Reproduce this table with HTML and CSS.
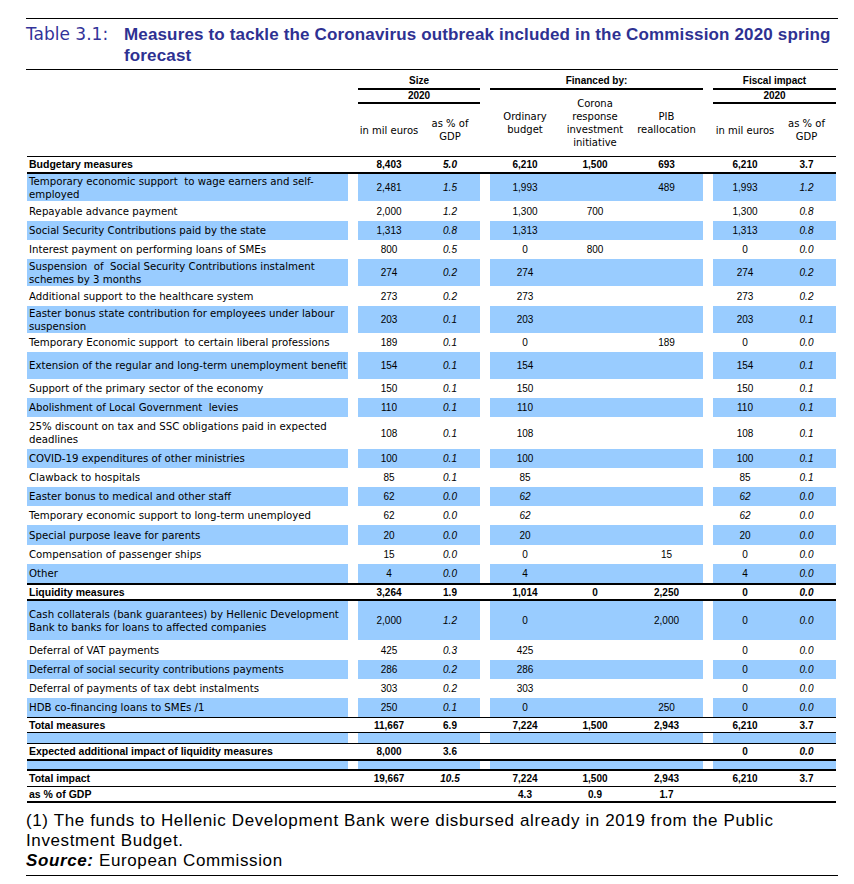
FILE: index.html
```html
<!DOCTYPE html>
<html>
<head>
<meta charset="utf-8">
<link rel="stylesheet" href="styles.css">
</head>
<body>
<div class="page">
  <div class="title">
    <div class="tno">Table 3.1:</div>
    <div class="ttl">Measures to tackle the Coronavirus outbreak included in the Commission 2020 spring<br>forecast</div>
  </div>

  <div class="tbl">
    <div class="r hd1">
      <div></div>
      <div class="hg">Size</div>
      <div class="hg">Financed by:</div>
      <div class="hg">Fiscal impact</div>
    </div>
    <div class="r hd2">
      <div></div>
      <div class="hcol">
        <div class="yr">2020</div>
        <div class="sub2"><span>in mil euros</span><span>as % of<br>GDP</span></div>
      </div>
      <div class="sub3"><span>Ordinary<br>budget</span><span>Corona<br>response<br>investment<br>initiative</span><span>PIB<br>reallocation</span></div>
      <div class="hcol">
        <div class="yr">2020</div>
        <div class="sub2 fs"><span>in mil euros</span><span>as % of<br>GDP</span></div>
      </div>
    </div>

    <div class="r bold h17 b2">
      <div class="lbl">Budgetary measures</div>
      <div class="g sz"><span>8,403</span><span class="i">5.0</span></div>
      <div class="g fn"><span>6,210</span><span>1,500</span><span>693</span></div>
      <div class="g fs"><span>6,210</span><span>3.7</span></div>
    </div>

    <div class="r blue h27">
      <div class="lbl">Temporary economic support &nbsp;to wage earners and self-<br>employed</div>
      <div class="g sz"><span>2,481</span><span class="i">1.5</span></div>
      <div class="g fn"><span>1,993</span><span></span><span>489</span></div>
      <div class="g fs"><span>1,993</span><span class="i">1.2</span></div>
    </div>
    <div class="r h20">
      <div class="lbl">Repayable advance payment</div>
      <div class="g sz"><span>2,000</span><span class="i">1.2</span></div>
      <div class="g fn"><span>1,300</span><span>700</span><span></span></div>
      <div class="g fs"><span>1,300</span><span class="i">0.8</span></div>
    </div>
    <div class="r blue h19">
      <div class="lbl">Social Security Contributions paid by the state</div>
      <div class="g sz"><span>1,313</span><span class="i">0.8</span></div>
      <div class="g fn"><span>1,313</span><span></span><span></span></div>
      <div class="g fs"><span>1,313</span><span class="i">0.8</span></div>
    </div>
    <div class="r h19">
      <div class="lbl">Interest payment on performing loans of SMEs</div>
      <div class="g sz"><span>800</span><span class="i">0.5</span></div>
      <div class="g fn"><span>0</span><span>800</span><span></span></div>
      <div class="g fs"><span>0</span><span class="i">0.0</span></div>
    </div>
    <div class="r blue h27">
      <div class="lbl">Suspension &nbsp;of &nbsp;Social Security Contributions instalment<br>schemes by 3 months</div>
      <div class="g sz"><span>274</span><span class="i">0.2</span></div>
      <div class="g fn"><span>274</span><span></span><span></span></div>
      <div class="g fs"><span>274</span><span class="i">0.2</span></div>
    </div>
    <div class="r h20">
      <div class="lbl">Additional support to the healthcare system</div>
      <div class="g sz"><span>273</span><span class="i">0.2</span></div>
      <div class="g fn"><span>273</span><span></span><span></span></div>
      <div class="g fs"><span>273</span><span class="i">0.2</span></div>
    </div>
    <div class="r blue h27">
      <div class="lbl">Easter bonus state contribution for employees under labour<br>suspension</div>
      <div class="g sz"><span>203</span><span class="i">0.1</span></div>
      <div class="g fn"><span>203</span><span></span><span></span></div>
      <div class="g fs"><span>203</span><span class="i">0.1</span></div>
    </div>
    <div class="r h19">
      <div class="lbl">Temporary Economic support &nbsp;to certain liberal professions</div>
      <div class="g sz"><span>189</span><span class="i">0.1</span></div>
      <div class="g fn"><span>0</span><span></span><span>189</span></div>
      <div class="g fs"><span>0</span><span class="i">0.0</span></div>
    </div>
    <div class="r blue h27">
      <div class="lbl">Extension of the regular and long-term unemployment benefit</div>
      <div class="g sz"><span>154</span><span class="i">0.1</span></div>
      <div class="g fn"><span>154</span><span></span><span></span></div>
      <div class="g fs"><span>154</span><span class="i">0.1</span></div>
    </div>
    <div class="r h19">
      <div class="lbl">Support of the primary sector of the economy</div>
      <div class="g sz"><span>150</span><span class="i">0.1</span></div>
      <div class="g fn"><span>150</span><span></span><span></span></div>
      <div class="g fs"><span>150</span><span class="i">0.1</span></div>
    </div>
    <div class="r blue h19">
      <div class="lbl">Abolishment of Local Government &nbsp;levies</div>
      <div class="g sz"><span>110</span><span class="i">0.1</span></div>
      <div class="g fn"><span>110</span><span></span><span></span></div>
      <div class="g fs"><span>110</span><span class="i">0.1</span></div>
    </div>
    <div class="r h32">
      <div class="lbl">25% discount on tax and SSC obligations paid in expected<br>deadlines</div>
      <div class="g sz"><span>108</span><span class="i">0.1</span></div>
      <div class="g fn"><span>108</span><span></span><span></span></div>
      <div class="g fs"><span>108</span><span class="i">0.1</span></div>
    </div>
    <div class="r blue h19">
      <div class="lbl">COVID-19 expenditures of other ministries</div>
      <div class="g sz"><span>100</span><span class="i">0.1</span></div>
      <div class="g fn"><span>100</span><span></span><span></span></div>
      <div class="g fs"><span>100</span><span class="i">0.1</span></div>
    </div>
    <div class="r h19">
      <div class="lbl">Clawback to hospitals</div>
      <div class="g sz"><span>85</span><span class="i">0.1</span></div>
      <div class="g fn"><span>85</span><span></span><span></span></div>
      <div class="g fs"><span>85</span><span class="i">0.1</span></div>
    </div>
    <div class="r blue h19">
      <div class="lbl">Easter bonus to medical and other staff</div>
      <div class="g sz"><span>62</span><span class="i">0.0</span></div>
      <div class="g fn"><span class="i">62</span><span></span><span></span></div>
      <div class="g fs"><span class="i">62</span><span class="i">0.0</span></div>
    </div>
    <div class="r h19">
      <div class="lbl">Temporary economic support to long-term unemployed</div>
      <div class="g sz"><span>62</span><span class="i">0.0</span></div>
      <div class="g fn"><span class="i">62</span><span></span><span></span></div>
      <div class="g fs"><span class="i">62</span><span class="i">0.0</span></div>
    </div>
    <div class="r blue h20">
      <div class="lbl">Special purpose leave for parents</div>
      <div class="g sz"><span>20</span><span class="i">0.0</span></div>
      <div class="g fn"><span>20</span><span></span><span></span></div>
      <div class="g fs"><span>20</span><span class="i">0.0</span></div>
    </div>
    <div class="r h19">
      <div class="lbl">Compensation of passenger ships</div>
      <div class="g sz"><span>15</span><span class="i">0.0</span></div>
      <div class="g fn"><span>0</span><span></span><span>15</span></div>
      <div class="g fs"><span>0</span><span class="i">0.0</span></div>
    </div>
    <div class="r blue h21 b2">
      <div class="lbl">Other</div>
      <div class="g sz"><span>4</span><span class="i">0.0</span></div>
      <div class="g fn"><span>4</span><span></span><span></span></div>
      <div class="g fs"><span>4</span><span class="i">0.0</span></div>
    </div>

    <div class="r bold h16 b2">
      <div class="lbl">Liquidity measures</div>
      <div class="g sz"><span>3,264</span><span>1.9</span></div>
      <div class="g fn"><span>1,014</span><span>0</span><span>2,250</span></div>
      <div class="g fs"><span>0</span><span class="i">0.0</span></div>
    </div>
    <div class="r blue h39">
      <div class="lbl">Cash collaterals (bank guarantees) by Hellenic Development<br>Bank to banks for loans to affected companies</div>
      <div class="g sz"><span>2,000</span><span class="i">1.2</span></div>
      <div class="g fn"><span>0</span><span></span><span>2,000</span></div>
      <div class="g fs"><span>0</span><span class="i">0.0</span></div>
    </div>
    <div class="r h20">
      <div class="lbl">Deferral of VAT payments</div>
      <div class="g sz"><span>425</span><span class="i">0.3</span></div>
      <div class="g fn"><span>425</span><span></span><span></span></div>
      <div class="g fs"><span>0</span><span class="i">0.0</span></div>
    </div>
    <div class="r blue h19">
      <div class="lbl">Deferral of social security contributions payments</div>
      <div class="g sz"><span>286</span><span class="i">0.2</span></div>
      <div class="g fn"><span>286</span><span></span><span></span></div>
      <div class="g fs"><span>0</span><span class="i">0.0</span></div>
    </div>
    <div class="r h19">
      <div class="lbl">Deferral of payments of tax debt instalments</div>
      <div class="g sz"><span>303</span><span class="i">0.2</span></div>
      <div class="g fn"><span>303</span><span></span><span></span></div>
      <div class="g fs"><span>0</span><span class="i">0.0</span></div>
    </div>
    <div class="r blue h20 b1">
      <div class="lbl">HDB co-financing loans to SMEs /1</div>
      <div class="g sz"><span>250</span><span class="i">0.1</span></div>
      <div class="g fn"><span>0</span><span></span><span>250</span></div>
      <div class="g fs"><span>0</span><span class="i">0.0</span></div>
    </div>
    <div class="r bold h15 b1">
      <div class="lbl">Total measures</div>
      <div class="g sz"><span>11,667</span><span>6.9</span></div>
      <div class="g fn"><span>7,224</span><span>1,500</span><span>2,943</span></div>
      <div class="g fs"><span>6,210</span><span>3.7</span></div>
    </div>
    <div class="r blue h11 b1">
      <div class="lbl"></div>
      <div class="g"></div>
      <div class="g"></div>
      <div class="g"></div>
    </div>
    <div class="r bold h17 b2">
      <div class="lbl">Expected additional impact of liquidity measures</div>
      <div class="g sz"><span>8,000</span><span>3.6</span></div>
      <div class="g fn"><span></span><span></span><span></span></div>
      <div class="g fs"><span>0</span><span class="i">0.0</span></div>
    </div>
    <div class="r blue h10 b2">
      <div class="lbl"></div>
      <div class="g"></div>
      <div class="g"></div>
      <div class="g"></div>
    </div>
    <div class="r bold h16 b1">
      <div class="lbl">Total impact</div>
      <div class="g sz"><span>19,667</span><span class="i">10.5</span></div>
      <div class="g fn"><span>7,224</span><span>1,500</span><span>2,943</span></div>
      <div class="g fs"><span>6,210</span><span>3.7</span></div>
    </div>
    <div class="r bold h16 b2">
      <div class="lbl">as % of GDP</div>
      <div class="g sz"><span></span><span></span></div>
      <div class="g fn"><span>4.3</span><span>0.9</span><span>1.7</span></div>
      <div class="g fs"><span></span><span></span></div>
    </div>
  </div>

  <div class="foot">
    <div>(1) The funds to Hellenic Development Bank were disbursed already in 2019 from the Public<br>Investment Budget.</div>
    <div><b><i>Source:</i></b> European Commission</div>
  </div>
</div>
</body>
</html>
```

FILE: styles.css
```css
* { box-sizing: border-box; }
body {
  margin: 0;
  background: #fff;
  color: #000;
  font-family: "DejaVu Sans", sans-serif;
}
.page {
  width: 812px;
  margin: 18px 0 0 26px;
}
.title {
  display: flex;
  border-top: 1px solid #000;
  border-bottom: 1px solid #000;
  padding: 5px 0 3px;
  line-height: 21px;
  white-space: nowrap;
}
.tno {
  width: 98px;
  flex: none;
  font-family: "DejaVu Sans", sans-serif;
  font-size: 17px;
  color: #333399;
}
.ttl {
  font-family: "Liberation Sans", Arial, sans-serif;
  font-weight: bold;
  font-size: 17px;
  letter-spacing: 0.15px;
  color: #2e3192;
}
.tbl {
  width: 809px;
  margin-left: 1px;
}
.r {
  display: grid;
  grid-template-columns: 321px 122px 213px 123px;
  column-gap: 10px;
  font-family: "Liberation Sans", Arial, sans-serif;
  font-size: 10px;
}
.b1 { border-bottom: 1px solid #000; }
.b2 { border-bottom: 2px solid #000; }
.h10 { height: 10px; }
.h11 { height: 11px; }
.h15 { height: 15px; }
.h16 { height: 16px; }
.h17 { height: 17px; }
.h19 { height: 19px; }
.h20 { height: 20px; }
.h21 { height: 21px; }
.h27 { height: 27px; }
.h32 { height: 32px; }
.h39 { height: 39px; }

/* header */
.hd1 { height: 20px; }
.hg {
  border-bottom: 2px solid #000;
  display: flex;
  align-items: flex-end;
  justify-content: center;
  padding-bottom: 1px;
  line-height: 12px;
  font-weight: bold;
  font-size: 10px;
}
.hd2 {
  height: 67px;
  border-bottom: 1px solid #000;
}
.hcol {
  display: flex;
  flex-direction: column;
}
.yr {
  height: 14px;
  border-bottom: 2px solid #000;
  text-align: center;
  line-height: 12px;
  font-weight: bold;
}
.sub2, .sub3 {
  display: grid;
  flex: 1;
  font-family: "DejaVu Sans", sans-serif;
  font-size: 10px;
  line-height: 13px;
}
.sub2 { grid-template-columns: 62px 60px; }
.sub2.fs { grid-template-columns: 64px 59px; }
.sub3 { grid-template-columns: 70px 70px 73px; }
.sub2 span, .sub3 span {
  display: flex;
  align-items: center;
  justify-content: center;
  text-align: center;
}

/* body rows */
.g { display: grid; }
.sz { grid-template-columns: 62px 60px; }
.fn { grid-template-columns: 70px 70px 73px; }
.fs { grid-template-columns: 64px 59px; }
.g span {
  display: flex;
  align-items: center;
  justify-content: center;
}
.i { font-style: italic; }
.lbl {
  display: flex;
  align-items: center;
  padding-left: 2px;
  white-space: nowrap;
  font-family: "DejaVu Sans", sans-serif;
  font-size: 10.2px;
  line-height: 13px;
}
.blue .lbl, .blue .g { background: #99ccff; }
.bold .lbl {
  font-family: "Liberation Sans", Arial, sans-serif;
  font-weight: bold;
  font-size: 10.5px;
}
.bold .g span { font-weight: bold; }

/* footnote */
.foot {
  margin-top: 8px;
  padding-bottom: 4px;
  border-bottom: 1px solid #000;
  font-family: "Liberation Sans", Arial, sans-serif;
  font-size: 17px;
  letter-spacing: 0.62px;
  line-height: 20px;
  white-space: nowrap;
}
```
